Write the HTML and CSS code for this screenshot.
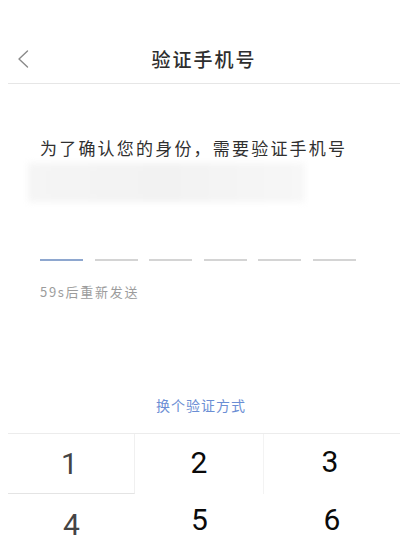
FILE: index.html
```html
<!DOCTYPE html>
<html lang="zh-CN">
<head>
<meta charset="utf-8">
<title>验证手机号</title>
<link rel="stylesheet" href="styles.css">
</head>
<body>
<div class="page">
  <header class="header">
    <div class="back">
      <svg width="12" height="18" viewBox="0 0 12 18"><path d="M10.5 1 L2 9 L10.5 17" fill="none" stroke="#8a8a8a" stroke-width="1.4" stroke-linecap="round" stroke-linejoin="round"/></svg>
    </div>
    <h1 class="title">验证手机号</h1>
    <div class="spacer"></div>
  </header>

  <main class="content">
    <p class="prompt">为了确认您的身份，需要验证手机号</p>
    <div class="masked"></div>
    <div class="code">
      <span class="slot active"></span>
      <span class="slot"></span>
      <span class="slot"></span>
      <span class="slot"></span>
      <span class="slot"></span>
      <span class="slot"></span>
    </div>
    <p class="resend">59s后重新发送</p>
    <p class="switch">换个验证方式</p>
  </main>

  <div class="keypad">
    <div class="key light k1">1</div>
    <div class="key k2">2</div>
    <div class="key k3">3</div>
    <div class="key light k4">4</div>
    <div class="key up">5</div>
    <div class="key up">6</div>
  </div>
</div>
</body>
</html>
```

FILE: styles.css
```css
* { box-sizing: border-box; }
html, body {
  margin: 0;
  padding: 0;
  background: #ffffff;
}
body {
  width: 400px;
  height: 556px;
  overflow: hidden;
  font-family: "Noto Sans CJK SC", "Noto Sans", sans-serif;
}
.page {
  width: 400px;
}
.header {
  margin-left: 8px;
  height: 84px;
  border-bottom: 1px solid #e6e6e6;
  display: grid;
  grid-template-columns: 40px 1fr 40px;
  align-items: end;
  padding-bottom: 14px;
}
.back {
  padding-left: 9px;
  height: 20px;
  display: flex;
  align-items: center;
}
.back svg { display: block; }
.title {
  margin: 0;
  text-align: center;
  font-size: 19px;
  font-weight: 500;
  line-height: 20px;
  letter-spacing: 2px;
  color: #2e2e2e;
}
.content {
  padding-top: 52px;
}
.prompt {
  margin: 0;
  padding-left: 40px;
  font-size: 17px;
  line-height: 24px;
  letter-spacing: 2.2px;
  color: #303030;
}
.masked {
  margin: 3px 0 0 28px;
  width: 277px;
  height: 39px;
  background: linear-gradient(90deg, #f5f5f5 0%, #f2f2f2 50%, #f7f7f7 100%);
  filter: blur(3px);
}
.code {
  margin-top: 57px;
  padding-left: 40px;
  display: flex;
  gap: 11.6px;
}
.slot {
  display: block;
  width: 43px;
  height: 2px;
  background: #d4d4d4;
}
.slot.active {
  background: #8ea7cf;
}
.resend {
  margin: 22px 0 0;
  padding-left: 40px;
  font-size: 13px;
  line-height: 18px;
  letter-spacing: 1.7px;
  color: #9c9c9c;
}
.switch {
  margin: 94px 0 0;
  text-align: center;
  font-size: 14px;
  line-height: 20px;
  letter-spacing: 1px;
  color: #6b8ed4;
  padding-left: 2px;
}
.keypad {
  margin: 18px 0 0 8px;
  border-top: 1px solid #ececec;
  display: grid;
  grid-template-columns: 127px 129px 1fr;
  grid-template-rows: 60px 56px;
}
.key {
  display: flex;
  align-items: center;
  justify-content: center;
  font-family: Roboto, "Noto Sans", sans-serif;
  font-size: 30px;
  color: #0a0a0a;
}
.key.light {
  color: #444444;
}
.k1 {
  border-right: 1px solid #f0f0f0;
  border-bottom: 1px solid #e4e4e4;
  padding-right: 3px;
}
.k2 {
  border-right: 1px solid #f3f3f3;
  padding-bottom: 4px;
}
.k3 {
  padding-bottom: 6px;
  padding-right: 4px;
}
.k4 {
  padding-top: 4px;
}
.up {
  padding-bottom: 6px;
}
```
